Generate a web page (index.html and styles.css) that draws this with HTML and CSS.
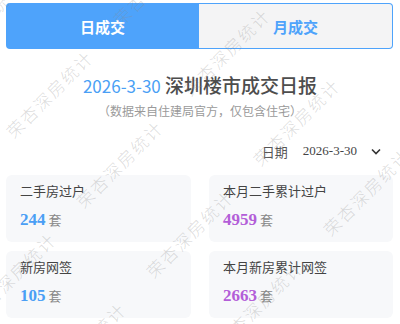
FILE: index.html
```html
<html>
<head>
<meta charset="utf-8">
<title>深圳楼市成交日报</title>
<link rel="stylesheet" href="styles.css">
</head>
<body>

<div class="tabs">
<div class="tab active">日成交</div>
<div class="tab">月成交</div>
</div>

<h1 class="title"><span class="day">2026-3-30</span> 深圳楼市成交日报</h1>
<p class="note">（数据来自住建局官方，仅包含住宅）</p>

<div class="picker">
<span class="lbl">日期</span>
<span class="val">2026-3-30</span>
<svg class="arrow" width="10" height="7" viewBox="0 0 10 7"><polyline points="1,1.5 5,5.5 9,1.5" fill="none" stroke="#333" stroke-width="1.6"/></svg>
</div>

<div class="cards">
<div class="card">
<div class="name">二手房过户</div>
<div class="num"><b class="blue">244</b> 套</div>
</div>
<div class="card">
<div class="name">本月二手累计过户</div>
<div class="num"><b class="purple">4959</b> 套</div>
</div>
<div class="card">
<div class="name">新房网签</div>
<div class="num"><b class="blue">105</b> 套</div>
</div>
<div class="card">
<div class="name">本月新房累计网签</div>
<div class="num"><b class="purple">2663</b> 套</div>
</div>
</div>

<!-- watermark -->
<div class="marks">
<span class="wm w1">荣杏深房统计</span>
<span class="wm w2">荣杏深房统计</span>
<span class="wm w3">荣杏深房统计</span>
<span class="wm w4">荣杏深房统计</span>
<span class="wm w5">荣杏深房统计</span>
<span class="wm w6">荣杏深房统计</span>
<span class="wm w7">荣杏深房统计</span>
<span class="wm w8">荣杏深房统计</span>
<span class="wm w9">荣杏深房统计</span>
<span class="wm w10">荣杏深房统计</span>
<span class="wm w11">荣杏深房统计</span>
</div>

</body>
</html>
```

FILE: styles.css
```css
html { overflow:hidden; }
body { margin:0; background-color:#fff; font-family:"Noto Sans CJK SC", "Noto Sans", sans-serif; color:#333; position:relative; height:324px; overflow:hidden; }

.tabs { display:flex; height:46px; margin:3px 7px 0 6px; }
.tab { flex:1; display:flex; align-items:center; justify-content:center; font-size:15px; font-weight:600; color:#4ea3fb; background-color:#f4f4f5; border:1px solid #4ea3fb; border-left:none; border-radius:0 4px 4px 0; }
.tab.active { color:#fff; background-color:#4ea3fb; border:none; border-radius:4px 0 0 4px; }

.title { margin:23px 0 0 0; text-align:center; font-size:19px; line-height:26px; font-weight:500; color:#4d4d4d; }
.title .day { font-size:17px; font-weight:400; color:#4a9ff5; }
.note { margin:4px 0 0 0; text-align:center; font-size:12px; line-height:16px; color:#9a9a9a; }

.picker { display:flex; justify-content:flex-end; align-items:center; height:20px; margin-top:22px; padding-right:19px; font-size:13px; color:#555; }
.picker .val { margin-left:15px; font-family:"Liberation Serif", serif; font-size:13px; color:#444; }
.picker .arrow { margin-left:14px; }

.cards { display:grid; grid-template-columns:185px 184px; column-gap:18px; row-gap:9px; margin:14px 0 0 6px; }
.card { height:67px; box-sizing:border-box; padding:7px 14px 0 14px; background-color:#f7f8fa; border-radius:6px; }
.name { font-size:13px; line-height:18px; color:#444; }
.num { margin-top:9px; font-size:13px; line-height:22px; color:#888; }
.num b { font-family:"Liberation Serif", serif; font-size:17px; font-weight:700; }
.blue { color:#4a9ff5; }
.purple { color:#b35ed8; }

.marks { position:absolute; left:0; top:0; width:400px; height:324px; overflow:hidden; pointer-events:none; }
.wm { position:absolute; font-size:17px; line-height:17px; font-weight:300; letter-spacing:2px; white-space:nowrap; color:rgba(140,140,140,0.3); transform-origin:0 100%; transform:rotate(-45deg); }
.w1 { left:-55px; top:53px; }
.w2 { left:15px; top:123px; }
.w3 { left:85px; top:193px; }
.w4 { left:155px; top:263px; }
.w5 { left:225px; top:333px; }
.w6 { left:122px; top:11px; }
.w7 { left:192px; top:81px; }
.w8 { left:262px; top:151px; }
.w9 { left:332px; top:221px; }
.w10 { left:-22px; top:305px; }
.w11 { left:48px; top:375px; }
```
